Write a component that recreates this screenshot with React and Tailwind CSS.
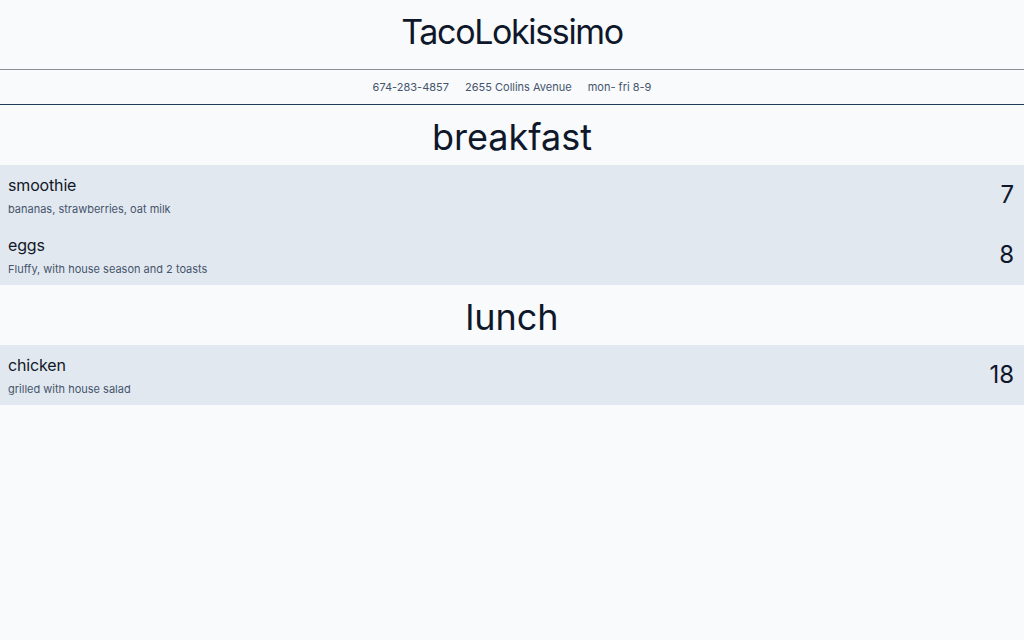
import React from 'react';

const menu = [
  {
    title: 'breakfast',
    items: [
      { name: 'smoothie', description: 'bananas, strawberries, oat milk', price: 7 },
      { name: 'eggs', description: 'Fluffy, with house season and 2 toasts', price: 8 },
    ],
  },
  {
    title: 'lunch',
    items: [
      { name: 'chicken', description: 'grilled with house salad', price: 18 },
    ],
  },
];

const MenuItem = ({ item }) => (
  <div className="flex items-center justify-between px-2 py-2">
    <div>
      <h3 className="text-base leading-6 tracking-[-0.01em] text-[#111827]">{item.name}</h3>
      <p className="mt-1 text-[11px] leading-4 text-slate-600">{item.description}</p>
    </div>
    <span className="pr-0.5 text-2xl leading-8 text-slate-900">{item.price}</span>
  </div>
);

export default function App() {
  return (
    <div className="min-h-screen bg-slate-50 font-['Inter',sans-serif] text-slate-900">
      <header className="border-b border-[#8a8d91] pt-3 pb-[17px] text-center">
        <h1 className="text-[34px] leading-10 tracking-[-0.04em] text-slate-900">TacoLokissimo</h1>
      </header>

      <div className="flex justify-center gap-4 border-b border-[#1d3b56] py-[9px] text-[11px] leading-4 text-slate-600">
        <span>674-283-4857</span>
        <span>2655 Collins Avenue</span>
        <span>mon- fri 8-9</span>
      </div>

      {menu.map(section => (
        <section key={section.title}>
          <h2 className="pt-3 pb-2 text-center text-4xl leading-10 text-slate-900">{section.title}</h2>
          <div className="bg-slate-200">
            {section.items.map(item => (
              <MenuItem key={item.name} item={item} />
            ))}
          </div>
        </section>
      ))}
    </div>
  );
}
